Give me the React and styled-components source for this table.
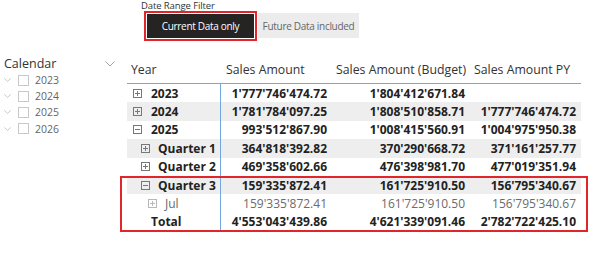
import React from "react";
import styled, { createGlobalStyle, css } from "styled-components";

const GlobalStyle = createGlobalStyle`
  html, body {
    margin: 0;
    padding: 0;
    background: #ffffff;
  }
  body {
    font-family: "Open Sans", "Noto Sans", sans-serif;
    color: #252423;
  }
`;

const Page = styled.div`
  width: 605px;
  height: 253px;
  overflow: hidden;
  background: #fff;
`;

// 상단 필터
const FilterBar = styled.div`
  padding-left: 141px;
`;

const FilterTitle = styled.div`
  font-size: 9.5px;
  line-height: 11px;
  color: #333;
  letter-spacing: -0.1px;
`;

const ButtonRow = styled.div`
  display: flex;
  gap: 4px;
  margin-top: 3px;
  padding-left: 6px;
`;

const ToggleButton = styled.div`
  height: 24px;
  display: flex;
  align-items: center;
  justify-content: center;
  font-size: 10px;
  letter-spacing: -0.3px;
  white-space: nowrap;
  box-sizing: border-box;
  ${({ $active }) =>
    $active
      ? css`
          width: 107px;
          background: #252423;
          color: #fff;
          outline: 2px solid #e0262b;
          outline-offset: 1px;
        `
      : css`
          width: 101px;
          height: 25px;
          margin-top: -1px;
          background: #ececec;
          color: #666;
        `}
`;

const Content = styled.div`
  display: flex;
  margin-top: 17px;
`;

// 슬라이서
const Slicer = styled.div`
  width: 127px;
  flex: none;
  padding-left: 4px;
  box-sizing: border-box;
`;

const SlicerHeader = styled.div`
  display: flex;
  justify-content: space-between;
  align-items: center;
  padding-right: 12px;
  height: 17px;
  font-size: 12.5px;
  color: #333;
`;

const SlicerItem = styled.div`
  display: flex;
  align-items: center;
  height: 16.2px;
  font-size: 10.5px;
  color: #666;
`;

const Checkbox = styled.span`
  width: 9px;
  height: 9px;
  border: 1px solid #c8c8c8;
  margin: 0 6px 0 7px;
`;

// 매트릭스
const Matrix = styled.div`
  width: 454px;
`;

const gridCols = css`
  display: grid;
  grid-template-columns: 93px 110px 138px 113px;
`;

const HeaderRow = styled.div`
  ${gridCols};
  height: 28px;
  align-items: center;
  border-bottom: 1px solid #72a7e0;
  font-size: 12.3px;
  color: #333;
`;

const HeaderCell = styled.div`
  padding-left: ${({ $first }) => ($first ? 4 : 6)}px;
  white-space: nowrap;
`;

const Row = styled.div`
  ${gridCols};
  height: 18.4px;
  align-items: center;
  font-size: 12px;
  font-weight: ${({ $light }) => ($light ? 400 : 700)};
  color: ${({ $light }) => ($light ? "#6b6b6b" : "#222")};
  background: ${({ $band }) => ($band ? "#eeeeee" : "transparent")};
`;

const LabelCell = styled.div`
  display: flex;
  align-items: center;
  height: 100%;
  padding-left: ${({ $indent }) => $indent}px;
  white-space: nowrap;
`;

const ValueCell = styled.div`
  height: 100%;
  display: flex;
  align-items: center;
  justify-content: flex-end;
  padding-right: ${({ $last }) => ($last ? 5 : 3)}px;
  white-space: nowrap;
  ${({ $divider }) =>
    $divider &&
    css`
      border-left: 1px solid #72a7e0;
    `}
`;

const Highlight = styled.div`
  position: relative;
  &::after {
    content: "";
    position: absolute;
    top: 0;
    bottom: -1px;
    left: -7px;
    right: -7px;
    border: 2px solid #e0262b;
    pointer-events: none;
  }
`;

const IconBox = styled.span`
  display: inline-flex;
  margin-right: ${({ $gap }) => $gap}px;
`;

function ExpandIcon({ open, light, gap = 9 }) {
  const c = light ? "#b8b8b8" : "#777";
  return (
    <IconBox $gap={gap}>
      <svg width="9" height="9" viewBox="0 0 9 9">
        <rect x="0.5" y="0.5" width="8" height="8" fill="none" stroke={c} />
        <line x1="2" y1="4.5" x2="7" y2="4.5" stroke={c} />
        {!open && <line x1="4.5" y1="2" x2="4.5" y2="7" stroke={c} />}
      </svg>
    </IconBox>
  );
}

function Chevron({ size = 10, color = "#999" }) {
  return (
    <svg width={size} height={size * 0.6} viewBox="0 0 10 6">
      <polyline points="0.5,0.5 5,5 9.5,0.5" fill="none" stroke={color} strokeWidth="0.9" />
    </svg>
  );
}

const rows = [
  { label: "2023", indent: 6, icon: "plus", v: ["1'777'746'474.72", "1'804'412'671.84", ""] },
  { label: "2024", indent: 6, icon: "plus", band: true, v: ["1'781'784'097.25", "1'808'510'858.71", "1'777'746'474.72"] },
  { label: "2025", indent: 6, icon: "minus", v: ["993'512'867.90", "1'008'415'560.91", "1'004'975'950.38"] },
  { label: "Quarter 1", indent: 14, icon: "plus", band: true, v: ["364'818'392.82", "370'290'668.72", "371'161'257.77"] },
  { label: "Quarter 2", indent: 14, icon: "plus", v: ["469'358'602.66", "476'398'981.70", "477'019'351.94"] },
];

const highlighted = [
  { label: "Quarter 3", indent: 14, icon: "minus", band: true, v: ["159'335'872.41", "161'725'910.50", "156'795'340.67"] },
  { label: "Jul", indent: 21, icon: "plus", light: true, v: ["159'335'872.41", "161'725'910.50", "156'795'340.67"] },
  { label: "Total", indent: 24, v: ["4'553'043'439.86", "4'621'339'091.46", "2'782'722'425.10"] },
];

function MatrixRow({ r }) {
  return (
    <Row $band={r.band} $light={r.light}>
      <LabelCell $indent={r.indent}>
        {r.icon && <ExpandIcon open={r.icon === "minus"} light={r.light} gap={r.label.length > 4 || r.light ? 8 : 9} />}
        {r.label}
      </LabelCell>
      <ValueCell $divider>{r.v[0]}</ValueCell>
      <ValueCell>{r.v[1]}</ValueCell>
      <ValueCell $last>{r.v[2]}</ValueCell>
    </Row>
  );
}

export default function App() {
  return (
    <Page>
      <GlobalStyle />
      <FilterBar>
        <FilterTitle>Date Range Filter</FilterTitle>
        <ButtonRow>
          <ToggleButton $active>Current Data only</ToggleButton>
          <ToggleButton>Future Data included</ToggleButton>
        </ButtonRow>
      </FilterBar>
      <Content>
        <Slicer>
          <SlicerHeader>
            <span>Calendar</span>
            <Chevron size={10} />
          </SlicerHeader>
          {["2023", "2024", "2025", "2026"].map((y) => (
            <SlicerItem key={y}>
              <Chevron size={7} color="#aaa" />
              <Checkbox />
              {y}
            </SlicerItem>
          ))}
        </Slicer>
        <Matrix>
          <HeaderRow>
            <HeaderCell $first>Year</HeaderCell>
            <HeaderCell>Sales Amount</HeaderCell>
            <HeaderCell>Sales Amount (Budget)</HeaderCell>
            <HeaderCell>Sales Amount PY</HeaderCell>
          </HeaderRow>
          {rows.map((r) => (
            <MatrixRow key={r.label} r={r} />
          ))}
          <Highlight>
            {highlighted.map((r) => (
              <MatrixRow key={r.label} r={r} />
            ))}
          </Highlight>
        </Matrix>
      </Content>
    </Page>
  );
}
